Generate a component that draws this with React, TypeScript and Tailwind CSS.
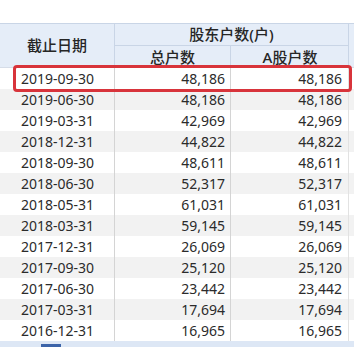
import React from "react";

const rows: [string, string, string][] = [
  ["2019-09-30", "48,186", "48,186"],
  ["2019-06-30", "48,186", "48,186"],
  ["2019-03-31", "42,969", "42,969"],
  ["2018-12-31", "44,822", "44,822"],
  ["2018-09-30", "48,611", "48,611"],
  ["2018-06-30", "52,317", "52,317"],
  ["2018-05-31", "61,031", "61,031"],
  ["2018-03-31", "59,145", "59,145"],
  ["2017-12-31", "26,069", "26,069"],
  ["2017-09-30", "25,120", "25,120"],
  ["2017-06-30", "23,442", "23,442"],
  ["2017-03-31", "17,694", "17,694"],
  ["2016-12-31", "16,965", "16,965"],
];

export default function App() {
  return (
    <div
      className="relative w-[354px] h-[347px] overflow-hidden bg-white text-[#2b2b2b]"
      style={{ fontFamily: '"Noto Sans", "Noto Sans CJK SC", sans-serif' }}
    >
      <div className="h-[23px]" />

      {/* header */}
      <div className="grid grid-cols-[115px_234px_5px] grid-rows-[22px_21px] bg-[#e5edf8] border-t border-[#c9d5e6] text-[15px] font-medium text-[#262626]">
        <div className="row-span-2 flex items-center justify-center border-r border-[#c9d5e6]">
          截止日期
        </div>
        <div className="flex items-center justify-center border-b border-r border-[#c9d5e6]">
          股东户数(户)
        </div>
        <div className="row-span-2" />
        <div className="grid grid-cols-[116px_118px] border-r border-[#c9d5e6]">
          <div className="flex items-center justify-center border-r border-[#c9d5e6]">总户数</div>
          <div className="flex items-center justify-center">A股户数</div>
        </div>
      </div>

      {/* body */}
      <div className="border-t border-[#d6dde8]">
        {rows.map((r, i) => (
          <div
            key={r[0]}
            className={`grid grid-cols-[115px_116px_118px_5px] h-[21px] text-[14px] leading-[21px] ${
              i % 2 === 1 ? "bg-[#f2f2f2]" : "bg-white"
            }`}
          >
            <div className="pl-[21px] border-r border-[#d4d4d4]">{r[0]}</div>
            <div className="pr-[5px] text-right border-r border-[#d4d4d4]">{r[1]}</div>
            <div className="pr-[6px] text-right border-r border-[#e2e2e2]">{r[2]}</div>
            <div />
          </div>
        ))}
      </div>

      {/* scrollbar strip */}
      <div className="h-[9px] bg-[#dde7f5] pl-[41px] pt-[3px]">
        <div className="w-[20px] h-full bg-[#3c64a9]" />
      </div>

      {/* highlight */}
      <div className="absolute left-[13px] top-[65px] w-[339px] h-[27px] border-[3px] border-[#d8343b] rounded-[4px]" />
    </div>
  );
}
